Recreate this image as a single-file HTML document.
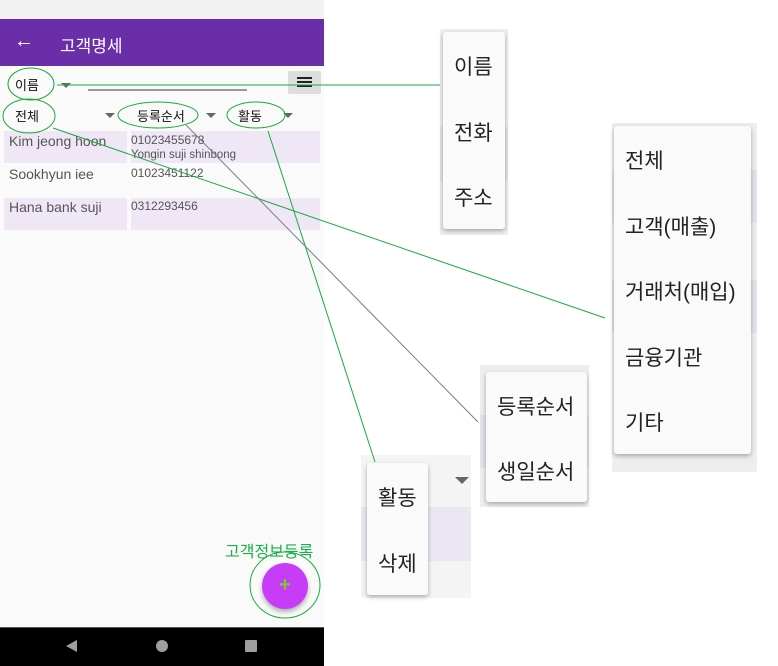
<!DOCTYPE html>
<html><head><meta charset="utf-8"><style>
*{margin:0;padding:0;box-sizing:border-box}
body{width:778px;height:666px;background:#fff;position:relative;overflow:hidden;font-family:"Liberation Sans","Noto Sans CJK KR",sans-serif}
.a{position:absolute}
.card{position:absolute;background:#fafafa;border-radius:3px;box-shadow:0 2px 5px rgba(0,0,0,.3)}
.it{position:absolute;left:11px;font-size:21px;color:#222;white-space:nowrap}
.tri{position:absolute;width:0;height:0;border-left:5px solid transparent;border-right:5px solid transparent;border-top:5px solid #666}
</style></head><body>
<div class="a" style="left:0;top:0;width:324px;height:627px;background:#fafafa"></div>
<div class="a" style="left:0;top:0;width:324px;height:19px;background:#f2f2f2"></div>
<div class="a" style="left:0;top:19px;width:324px;height:47px;background:#6a2ea8"></div>
<div class="a" style="left:14px;top:30px;color:#fff;font-size:20px">←</div>
<div class="a" style="left:60px;top:32px;color:#fff;font-size:17px">고객명세</div>
<div class="a" style="left:15px;top:75px;font-size:13px;color:#111">이름</div>
<div class="tri" style="left:61px;top:83px"></div>
<div class="a" style="left:88px;top:89px;width:159px;height:2px;background:#999"></div>
<div class="a" style="left:288px;top:71px;width:33px;height:23px;background:#ddd;border-radius:2px"></div>
<div class="a" style="left:297px;top:77px;width:15px;height:2px;background:#222;box-shadow:0 4px 0 #222,0 8px 0 #222"></div>
<div class="a" style="left:15px;top:106px;font-size:13px;color:#111">전체</div>
<div class="tri" style="left:105px;top:113px"></div>
<div class="a" style="left:137px;top:106px;font-size:13px;color:#111">등록순서</div>
<div class="tri" style="left:206px;top:113px"></div>
<div class="a" style="left:238px;top:106px;font-size:13px;color:#111">활동</div>
<div class="tri" style="left:283px;top:113px"></div>
<div class="a" style="left:4px;top:131px;width:123px;height:32px;background:#efe7f5"></div>
<div class="a" style="left:131px;top:131px;width:189px;height:32px;background:#efe7f5"></div>
<div class="a" style="left:4px;top:198px;width:123px;height:32px;background:#efe7f5"></div>
<div class="a" style="left:131px;top:198px;width:189px;height:32px;background:#efe7f5"></div>
<div class="a" style="left:9px;top:133px;font-size:14px;color:#555">Kim jeong hoon</div>
<div class="a" style="left:131px;top:133px;font-size:12px;color:#555">01023455678</div>
<div class="a" style="left:131px;top:149px;font-size:11.5px;color:#555">Yongin suji shinbong</div>
<div class="a" style="left:9px;top:166px;font-size:14px;color:#555">Sookhyun iee</div>
<div class="a" style="left:131px;top:166px;font-size:12px;color:#555">01023451122</div>
<div class="a" style="left:9px;top:199px;font-size:14px;color:#555">Hana bank suji</div>
<div class="a" style="left:131px;top:199px;font-size:12px;color:#555">0312293456</div>
<div class="a" style="left:225px;top:538px;font-size:16px;color:#1ab04a">고객정보등록</div>
<div class="a" style="left:262px;top:563px;width:46px;height:46px;border-radius:50%;background:#c73df7;box-shadow:0 3px 5px rgba(0,0,0,.3);color:#7c3;font-size:20px;font-weight:bold;text-align:center;line-height:45px">+</div>
<div class="a" style="left:0;top:627px;width:324px;height:39px;background:#000;border-top:1px solid #555"></div>
<div class="a" style="left:66px;top:640px;width:0;height:0;border-top:6px solid transparent;border-bottom:6px solid transparent;border-right:11px solid #9e9e9e"></div>
<div class="a" style="left:156px;top:640px;width:12px;height:12px;border-radius:50%;background:#9e9e9e"></div>
<div class="a" style="left:245px;top:640px;width:12px;height:12px;border-radius:1px;background:#9e9e9e"></div>

<div class="a" style="left:440px;top:29px;width:68px;height:206px;background:#eee"></div>
<div class="a" style="left:440px;top:127px;width:68px;height:54px;background:#e6e0ec"></div>
<div class="card" style="left:443px;top:32px;width:62px;height:197px">
<div class="it" style="top:19px">이름</div><div class="it" style="top:85px">전화</div><div class="it" style="top:150px">주소</div></div>
<div class="a" style="left:612px;top:123px;width:145px;height:349px;background:#eee"></div>
<div class="a" style="left:612px;top:170px;width:145px;height:53px;background:#e6e0ec"></div>
<div class="a" style="left:612px;top:280px;width:145px;height:53px;background:#e6e0ec"></div>
<div class="card" style="left:614px;top:126px;width:137px;height:328px">
<div class="it" style="top:19px">전체</div><div class="it" style="top:85px">고객(매출)</div><div class="it" style="top:150px">거래처(매입)</div><div class="it" style="top:216px">금융기관</div><div class="it" style="top:281px">기타</div></div>
<div class="a" style="left:480px;top:365px;width:109px;height:142px;background:#eee"></div>
<div class="a" style="left:480px;top:415px;width:109px;height:53px;background:#e6e0ec"></div>
<div class="card" style="left:486px;top:372px;width:101px;height:130px">
<div class="it" style="top:19px">등록순서</div><div class="it" style="top:84px">생일순서</div></div>
<div class="a" style="left:361px;top:455px;width:110px;height:143px;background:#f4f4f4"></div>
<div class="a" style="left:361px;top:507px;width:110px;height:54px;background:#ece6f3"></div>
<div class="tri" style="left:455px;top:477px;border-width:7px 7px 0 7px"></div>
<div class="card" style="left:367px;top:463px;width:61px;height:132px">
<div class="it" style="top:19px">활동</div><div class="it" style="top:85px">삭제</div></div>

<svg class="a" style="left:0;top:0" width="778" height="666">
<g fill="none" stroke="#1aaa3a" stroke-width="1">
<ellipse cx="31" cy="84" rx="23" ry="16"/>
<ellipse cx="29" cy="116" rx="26" ry="17"/>
<ellipse cx="158" cy="115" rx="40" ry="13"/>
<ellipse cx="256" cy="115" rx="29" ry="13"/>
<ellipse cx="285" cy="585" rx="35" ry="33"/>
<line x1="57" y1="85" x2="440" y2="85"/>
<line x1="53" y1="128" x2="605" y2="318"/>
<line x1="268" y1="131" x2="375" y2="462"/>
</g>
<line x1="186" y1="125" x2="478" y2="422" stroke="#7a7a90" stroke-width="1"/>
</svg>
</body></html>
